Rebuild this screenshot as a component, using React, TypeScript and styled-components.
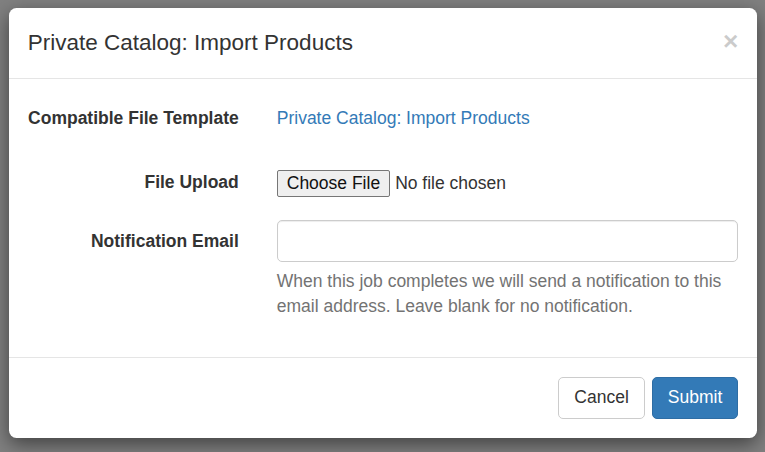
import styled, { createGlobalStyle } from 'styled-components';

const GlobalStyle = createGlobalStyle`
  html, body {
    margin: 0;
    padding: 0;
    background: #808080;
  }
  * {
    box-sizing: border-box;
  }
`;

const App = () => {
  return (
    <Page>
      <GlobalStyle />
      <Modal>
        <Header>
          <Title>Private Catalog: Import Products</Title>
          <Close type="button">×</Close>
        </Header>
        <Body>
          <FormRow>
            <Label>Compatible File Template</Label>
            <Field>
              <StaticLink href="#">Private Catalog: Import Products</StaticLink>
            </Field>
          </FormRow>
          <FormRow>
            <Label offset="11px">File Upload</Label>
            <Field offset="11px">
              <FileInput type="file" />
            </Field>
          </FormRow>
          <FormRow>
            <Label>Notification Email</Label>
            <Field>
              <TextInput type="email" />
              <Help>
                When this job completes we will send a notification to this email address. Leave
                blank for no notification.
              </Help>
            </Field>
          </FormRow>
        </Body>
        <Footer>
          <Button>Cancel</Button>
          <Button primary>Submit</Button>
        </Footer>
      </Modal>
    </Page>
  );
};

export default App;

interface OffsetProps {
  offset?: string;
}

interface ButtonProps {
  primary?: boolean;
}

const Page = styled.div`
  width: 765px;
  height: 452px;

  padding: 8px 8px 0 9px;

  background: #808080;
  overflow: hidden;

  font-family: 'Liberation Sans', Arial, sans-serif;
  font-size: 17.5px;
  color: #333;
`;

const Modal = styled.div`
  width: 748px;

  background: #fff;

  border-radius: 7.5px;
  box-shadow: 0 6px 19px rgba(0, 0, 0, 0.5);
`;

const Header = styled.div`
  display: flex;
  justify-content: space-between;
  align-items: flex-start;

  padding: 18.75px;

  border-bottom: 1px solid #e5e5e5;
`;

const Title = styled.h4`
  margin: 0;

  font-size: 22.5px;
  font-weight: 400;
  line-height: 1.42857;
`;

const Close = styled.button`
  margin-top: 1px;
  padding: 0;

  background: transparent;
  border: none;

  font-family: 'Liberation Sans', Arial, sans-serif;
  font-size: 26.25px;
  font-weight: 700;
  line-height: 1;
  color: #000;
  opacity: 0.2;
`;

const Body = styled.div`
  display: flex;
  flex-direction: column;

  padding: 18.75px;
  gap: 18.75px;
`;

const FormRow = styled.div`
  display: grid;
  grid-template-columns: 211px 1fr;
  column-gap: 38px;

  min-height: 42.5px;
`;

const Label = styled.label<OffsetProps>`
  padding-top: ${(props) => (props.offset ? props.offset : '8.75px')};

  text-align: right;
  font-weight: 700;
  line-height: 25px;
`;

const Field = styled.div<OffsetProps>`
  padding-top: ${(props) => (props.offset ? props.offset : '0')};
`;

const StaticLink = styled.a`
  display: block;

  padding: 8.75px 0;

  color: #337ab7;
  line-height: 25px;
  text-decoration: none;
`;

const FileInput = styled.input`
  display: block;

  font-family: 'Liberation Sans', Arial, sans-serif;
  font-size: 17.5px;
  color: #333;
  line-height: 20px;

  &::file-selector-button {
    height: 27px;

    margin-right: 5px;
    padding: 0 9px;

    background: #efefef;
    border: 1px solid #767676;
    border-radius: 2px;

    font-family: 'Liberation Sans', Arial, sans-serif;
    font-size: 17.5px;
    color: #111;
  }
`;

const TextInput = styled.input`
  display: block;

  width: 100%;
  height: 42.5px;

  padding: 7.5px 15px;

  background: #fff;

  border: 1px solid #ccc;
  border-radius: 5px;
  outline: none;
  box-shadow: inset 0 1px 1px rgba(0, 0, 0, 0.075);

  font-family: 'Liberation Sans', Arial, sans-serif;
  font-size: 17.5px;
`;

const Help = styled.p`
  margin: 6.25px 0 19.5px;

  color: #737373;
  line-height: 25px;
`;

const Footer = styled.div`
  display: flex;
  justify-content: flex-end;

  padding: 18.75px;
  gap: 7px;

  border-top: 1px solid #e5e5e5;
`;

const Button = styled.button<ButtonProps>`
  height: 42.5px;

  padding: 7.5px 15px;

  background: ${(props) => (props.primary ? '#337ab7' : '#fff')};

  border: 1px solid ${(props) => (props.primary ? '#2e6da4' : '#ccc')};
  border-radius: 5px;

  font-family: 'Liberation Sans', Arial, sans-serif;
  font-size: 17.5px;
  line-height: 25px;
  color: ${(props) => (props.primary ? '#fff' : '#333')};
`;
